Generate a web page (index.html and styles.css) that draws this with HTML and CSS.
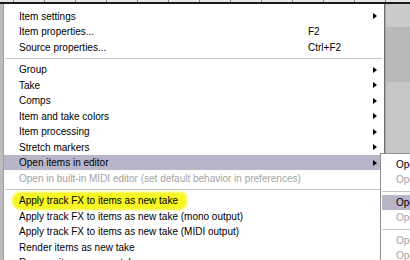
FILE: index.html
```html
<!DOCTYPE html>
<html lang="en">
<head>
  <meta charset="UTF-8" />
  <title>Item context menu</title>
  <link rel="stylesheet" href="styles.css">
</head>
<body>
  <div class="ruler"></div>
  <div class="tracks">
    <div class="track t1"></div>
    <div class="track t2"></div>
    <div class="track t3"></div>
  </div>

  <div class="menu">
    <div class="item"><span class="label">Item settings</span><span class="key"></span><span class="arrow"></span></div>
    <div class="item"><span class="label">Item properties...</span><span class="key">F2</span></div>
    <div class="item"><span class="label">Source properties...</span><span class="key">Ctrl+F2</span></div>
    <div class="sep"></div>
    <div class="item"><span class="label">Group</span><span class="key"></span><span class="arrow"></span></div>
    <div class="item"><span class="label">Take</span><span class="key"></span><span class="arrow"></span></div>
    <div class="item"><span class="label">Comps</span><span class="key"></span><span class="arrow"></span></div>
    <div class="item"><span class="label">Item and take colors</span><span class="key"></span><span class="arrow"></span></div>
    <div class="item"><span class="label">Item processing</span><span class="key"></span><span class="arrow"></span></div>
    <div class="item"><span class="label">Stretch markers</span><span class="key"></span><span class="arrow"></span></div>
    <div class="item active"><span class="label">Open items in editor</span><span class="key"></span><span class="arrow"></span></div>
    <div class="item disabled"><span class="label">Open in built-in MIDI editor (set default behavior in preferences)</span></div>
    <div class="sep"></div>
    <div class="item"><span class="label"><span class="marker">Apply track FX to items as new take</span></span></div>
    <div class="item"><span class="label">Apply track FX to items as new take (mono output)</span></div>
    <div class="item"><span class="label">Apply track FX to items as new take (MIDI output)</span></div>
    <div class="item"><span class="label">Render items as new take</span></div>
    <div class="item"><span class="label">Reverse items as new take</span></div>
  </div>

  <div class="submenu">
    <div class="item"><span class="label">Open items in primary external editor</span></div>
    <div class="item disabled"><span class="label">Open items in secondary external editor</span></div>
    <div class="sep"></div>
    <div class="item active"><span class="label">Open item copies in primary external editor</span></div>
    <div class="item disabled"><span class="label">Open item copies in secondary external editor</span></div>
    <div class="sep"></div>
    <div class="item disabled"><span class="label">Open items in built-in MIDI editor</span></div>
    <div class="item disabled"><span class="label">Open items in named MIDI editor</span></div>
  </div>
</body>
</html>
```

FILE: styles.css
```css
body {
  margin: 0;
  width: 410px;
  height: 260px;
  overflow: hidden;
  background-color: #c4c4c4;
  font-family: "Liberation Sans", Arial, sans-serif;
  font-size: 10px;
  color: #000;
  position: relative;
}
/* ruler with tick marks and the dark line under it */
.ruler {
  height: 2px;
  background-color: #e6e6e6;
  background-image: repeating-linear-gradient(to right, transparent 0, transparent 13px, #8a8a8a 13px, #8a8a8a 14px, transparent 14px, transparent 31px);
  border-bottom: 2px solid #1a1a1a;
}
.track {
  border-left: 3px solid #bdbdbd;
}
.t1 {
  height: 23px;
  background-color: #cbcbcb;
}
.t2 {
  height: 55px;
  background-color: #b9b9b9;
}
.t3 {
  height: 178px;
  background-color: #c6c6c6;
}
/* main popup menu */
.menu {
  position: absolute;
  left: 3px;
  top: 4px;
  width: 382px;
  height: 256px;
  box-sizing: border-box;
  padding-top: 4.25px;
  overflow: hidden;
  background-color: #fff;
  border-left: 1px solid #9c9c9c;
  border-right: 1px solid #6e6e6e;
  box-shadow: 1px 0 0 #a6a6a6;
}
.item {
  display: grid;
  grid-template-columns: 1fr 65px 4px;
  align-items: center;
  height: 15.5px;
  padding: 0 7px 0 15px;
  white-space: nowrap;
}
.arrow {
  width: 0;
  height: 0;
  border-left: 4px solid #000;
  border-top: 3.5px solid transparent;
  border-bottom: 3.5px solid transparent;
}
.item.active {
  background-color: #b9b5c9;
}
.item.disabled {
  color: #a3a3a3;
}
.sep {
  height: 7px;
  margin: 0 2px 0 1px;
  background: linear-gradient(#c4c4c4, #c4c4c4) no-repeat 0 3px / 100% 1px;
}
/* yellow marker stroke drawn over the screenshot */
.marker {
  position: relative;
  z-index: 0;
}
.marker::before {
  content: "";
  position: absolute;
  z-index: -1;
  left: -7px;
  right: -9px;
  top: -3px;
  bottom: -4px;
  background-color: #f6f622;
  border-radius: 9px 6px 8px 10px;
  filter: blur(1px);
}
/* submenu of "Open items in editor" */
.submenu {
  position: absolute;
  left: 380px;
  top: 153px;
  width: 30px;
  height: 107px;
  box-sizing: border-box;
  padding-top: 2.5px;
  overflow: hidden;
  background-color: #fff;
  border-left: 1px solid #8e8e8e;
  border-top: 1px solid #8e8e8e;
}
.submenu .item {
  display: block;
  padding: 0 0 0 14px;
  line-height: 15.5px;
  margin-left: 1px;
}
.submenu .sep {
  margin-left: 1px;
  margin-right: 0;
}
```
